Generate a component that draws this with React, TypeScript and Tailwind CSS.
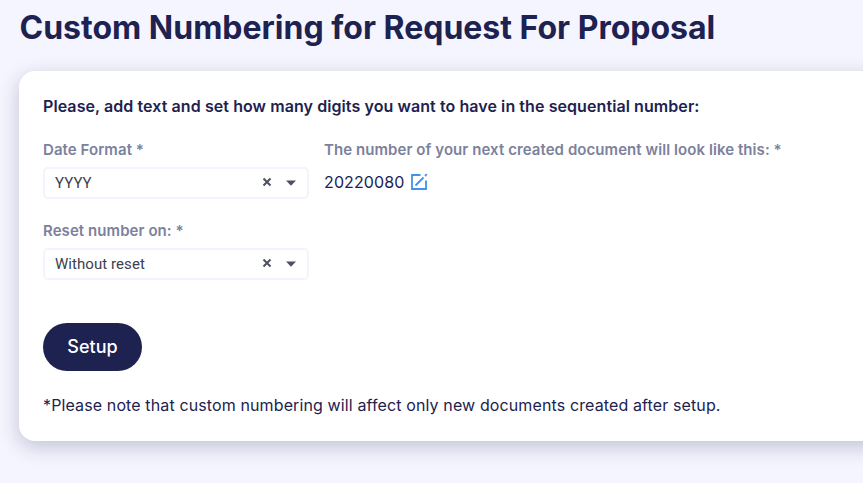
import React from "react";

function Select({ value }: { value: string }) {
  return (
    <div className="mt-[7px] flex h-8 w-[266px] items-center rounded-[5px] border-2 border-[#f1f5fb] bg-white pl-[10px] pr-[10px] font-[Roboto,sans-serif] text-[15px] tracking-[0.06px] text-[#3d404d]">
      <span className="flex-1">{value}</span>
      <svg width="10" height="10" viewBox="0 0 10 10" className="mr-[14px] -translate-x-px -translate-y-px">
        <path d="M1.5 1.5L8.5 8.5M8.5 1.5L1.5 8.5" stroke="#4d5260" strokeWidth="2" />
      </svg>
      <svg width="10" height="6" viewBox="0 0 10 6" className="-translate-x-px">
        <path d="M0 0.4H10L5 5.7Z" fill="#4d5260" />
      </svg>
    </div>
  );
}

export default function App() {
  return (
    <main className="h-[483px] w-[863px] overflow-hidden bg-[#f5f5ff] pl-[19px] font-[Inter,sans-serif] text-[#1d2250]">
      <h1 className="h-[71px] pl-[0.5px] pt-[8px] text-[32px] font-bold leading-[40px]">Custom Numbering for Request For Proposal</h1>
      <section className="h-[370px] w-[900px] rounded-[16px] bg-white pl-6 pt-[23px] shadow-[0_6px_20px_rgba(29,34,80,0.24)]">
        <p className="text-[16px] font-semibold leading-[24px] tracking-[0.08px]">Please, add text and set how many digits you want to have in the sequential number:</p>
        <div className="mt-[22px] flex">
          <div className="w-[281px]">
            <label className="block text-[15px] font-semibold leading-5 tracking-[0.07px] text-[#7c819c]">Date Format *</label>
            <Select value="YYYY" />
          </div>
          <div>
            <p className="text-[15px] font-semibold leading-5 tracking-[0.07px] text-[#7c819c]">The number of your next created document will look like this: *</p>
            <div className="mt-[10px] flex items-center gap-[6px] text-base leading-6 tracking-[0.12px]">
              20220080
              <svg width="18" height="18" viewBox="0 0 18 18" fill="none" stroke="#4292ec" strokeWidth="1.8" className="-ml-px">
                <path d="M10.5 2H2V16H16V7.5M5.5 12.5L13.5 4.5M15 3L16.8 1.2" />
              </svg>
            </div>
          </div>
        </div>
        <div className="mt-[22px]">
          <label className="block text-[15px] font-semibold leading-5 tracking-[0.07px] text-[#7c819c]">Reset number on: *</label>
          <Select value="Without reset" />
        </div>
        <button className="mt-[43px] block h-12 w-[99px] rounded-full bg-[#1d2250] pb-[2px] text-[18px] font-medium text-white">Setup</button>
        <p className="mt-[22px] text-[16px] leading-6 tracking-[0.12px]">*Please note that custom numbering will affect only new documents created after setup.</p>
      </section>
    </main>
  );
}
